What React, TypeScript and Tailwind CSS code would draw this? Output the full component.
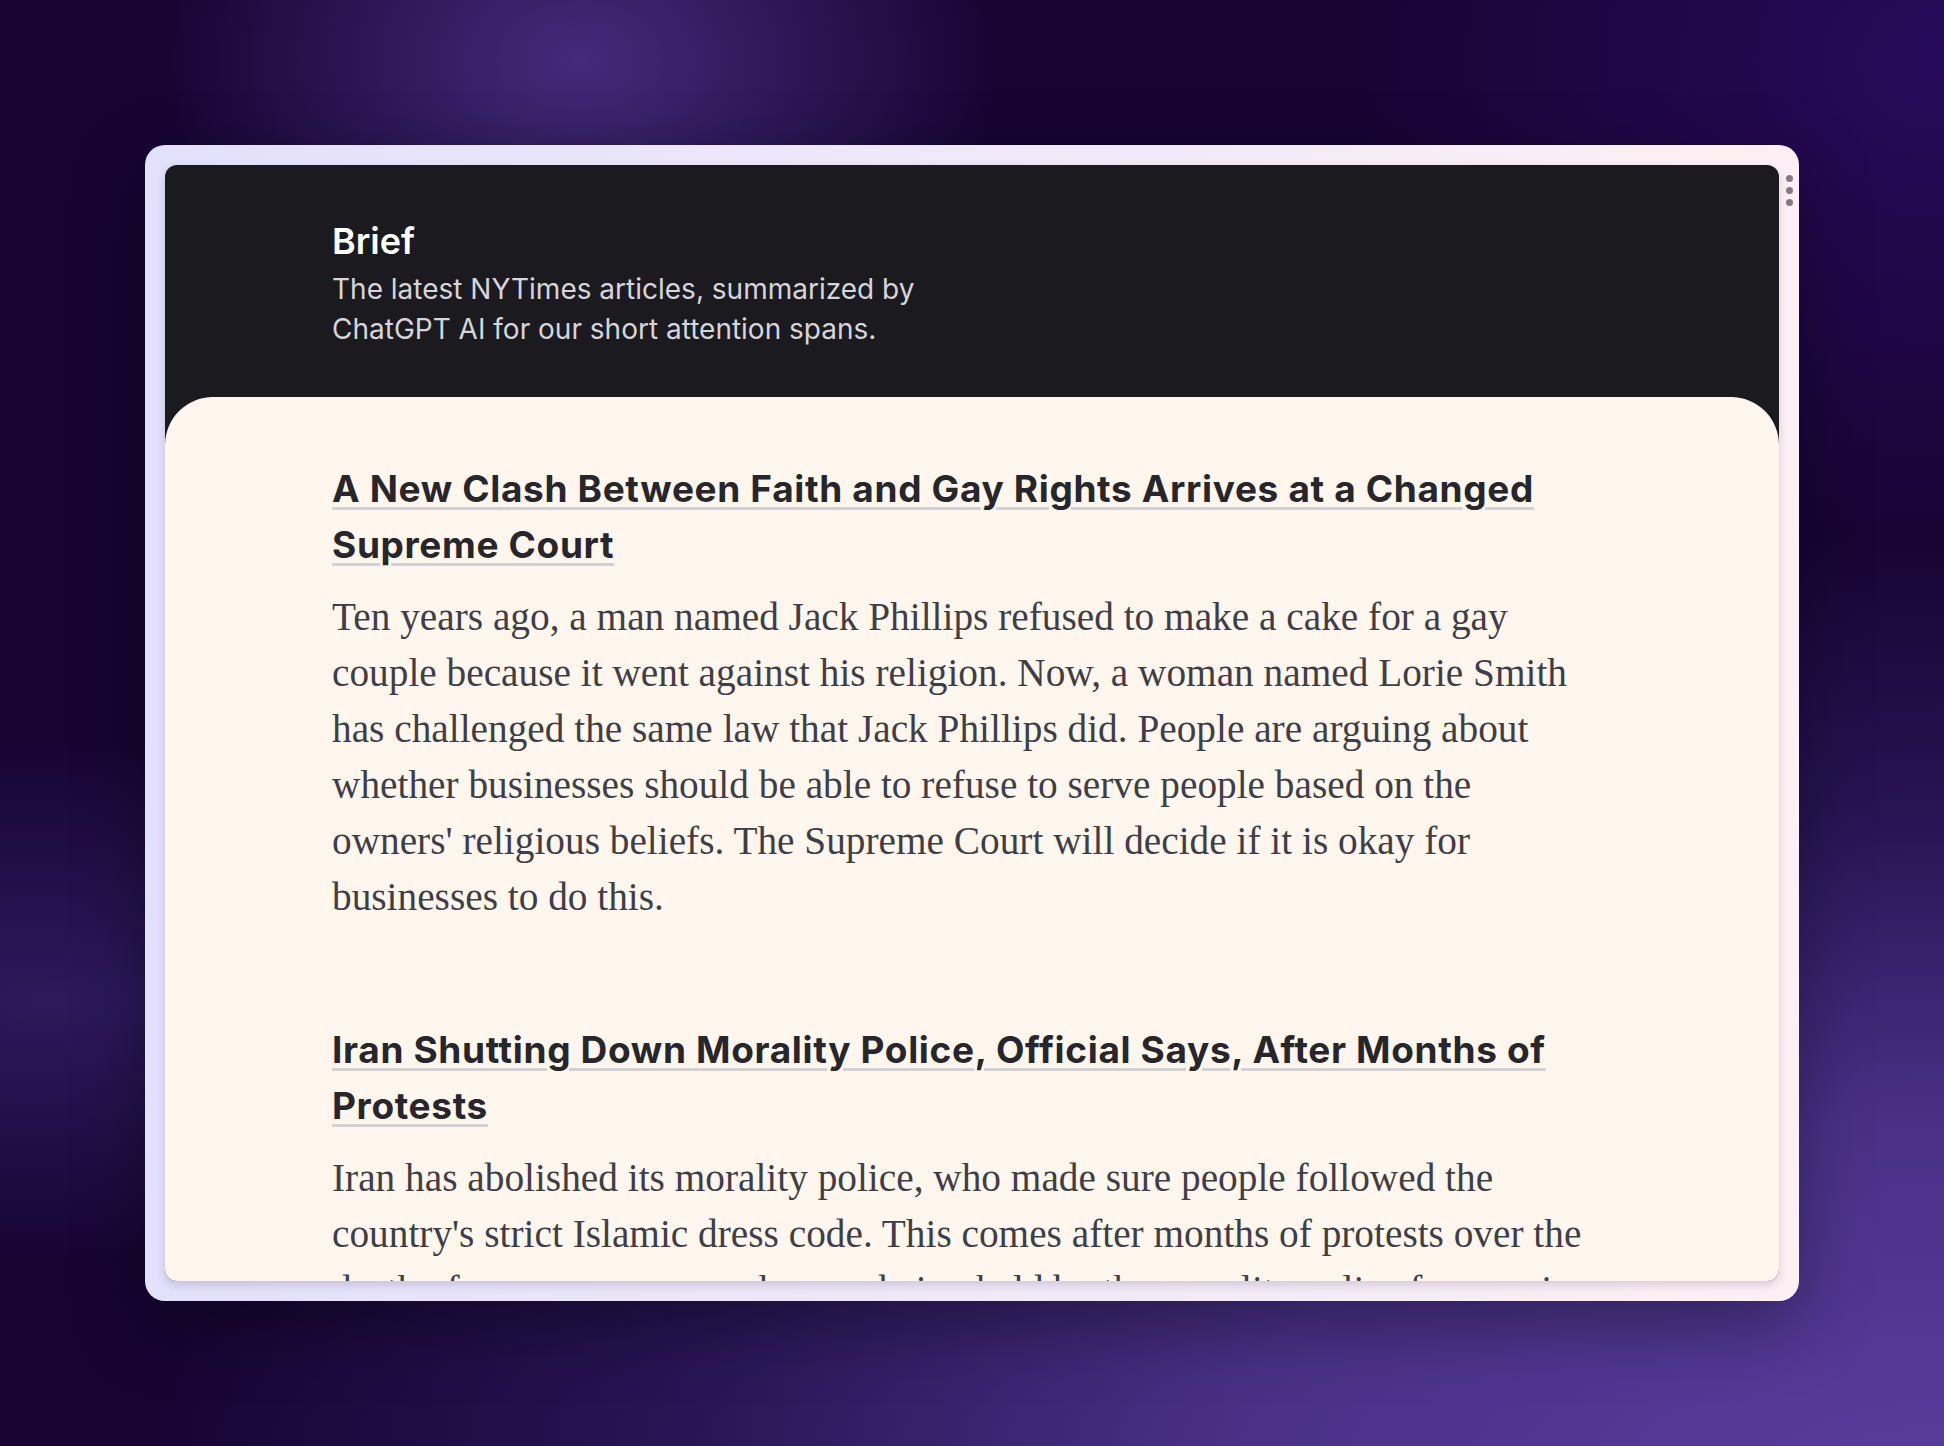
const articles = [
  {
    title: [
      "A New Clash Between Faith and Gay Rights Arrives at a Changed",
      "Supreme Court",
    ],
    summary: [
      "Ten years ago, a man named Jack Phillips refused to make a cake for a gay",
      "couple because it went against his religion. Now, a woman named Lorie Smith",
      "has challenged the same law that Jack Phillips did. People are arguing about",
      "whether businesses should be able to refuse to serve people based on the",
      "owners' religious beliefs. The Supreme Court will decide if it is okay for",
      "businesses to do this.",
    ],
  },
  {
    title: [
      "Iran Shutting Down Morality Police, Official Says, After Months of",
      "Protests",
    ],
    summary: [
      "Iran has abolished its morality police, who made sure people followed the",
      "country's strict Islamic dress code. This comes after months of protests over the",
      "death of a young woman who was being held by the morality police for wearing",
      "her hijab improperly. The protests became one of the biggest challenges to",
    ],
  },
];

function Article({ title, summary }: { title: string[]; summary: string[] }) {
  return (
    <article className="flex flex-col">
      <h2 className="font-['Inter',sans-serif] text-[37px] leading-[56px] font-bold text-[#27262b] tracking-[0.65px]">
        {title.map((line) => (
          <span key={line} className="block whitespace-nowrap">
            <span className="underline decoration-[#d1d1d6] decoration-[length:3px] underline-offset-[5px]">
              {line}
            </span>
          </span>
        ))}
      </h2>
      <p className="mt-4 font-['Liberation_Serif',serif] text-[39.3px] leading-[56px] text-[#3f3e46]">
        {summary.map((line) => (
          <span key={line} className="block whitespace-nowrap">
            {line}
          </span>
        ))}
      </p>
    </article>
  );
}

export default function App() {
  return (
    <div className="h-screen w-full flex items-center justify-center bg-[#170433] bg-[image:radial-gradient(ellipse_420px_300px_at_580px_60px,rgba(78,52,140,0.8),transparent),radial-gradient(ellipse_2100px_1150px_at_1944px_1520px,#5a3ea0,rgba(80,54,145,0.88)_35%,rgba(52,32,108,0.55)_62%,transparent_86%),radial-gradient(ellipse_900px_260px_at_60px_1000px,rgba(55,34,110,0.7),transparent),radial-gradient(ellipse_600px_500px_at_1944px_60px,rgba(42,12,100,0.8),transparent)]">
      <div className="relative w-[1654px] h-[1156px] p-5 rounded-[20px] bg-gradient-to-r from-[#e2e1fb] to-[#fdf0f4] shadow-[0_24px_70px_rgba(0,0,0,0.35)]">
        <div className="absolute right-[6px] top-[30px] flex flex-col gap-[5px]">
          <span className="w-[7px] h-[7px] rounded-full bg-[#7e7b82]" />
          <span className="w-[7px] h-[7px] rounded-full bg-[#7e7b82]" />
          <span className="w-[7px] h-[7px] rounded-full bg-[#7e7b82]" />
        </div>
        <div className="h-full flex flex-col rounded-xl overflow-hidden bg-[#1b1a1f] shadow-[0_4px_10px_rgba(60,40,80,0.18)]">
          <header className="px-[167px] pt-12 pb-12 font-['Inter',sans-serif]">
            <h1 className="text-[36px] leading-[56px] font-semibold text-white">
              Brief
            </h1>
            <p className="text-[28px] leading-[40px] text-[#d6d5db]">
              <span className="block">The latest NYTimes articles, summarized by</span>
              <span className="block">ChatGPT AI for our short attention spans.</span>
            </p>
          </header>
          <main className="flex-1 overflow-hidden rounded-t-[48px] bg-[#fff7ed]">
            <div className="w-[1280px] mx-auto pt-16 flex flex-col gap-[97px]">
              {articles.map((a) => (
                <Article key={a.title[0]} title={a.title} summary={a.summary} />
              ))}
            </div>
          </main>
        </div>
      </div>
    </div>
  );
}
